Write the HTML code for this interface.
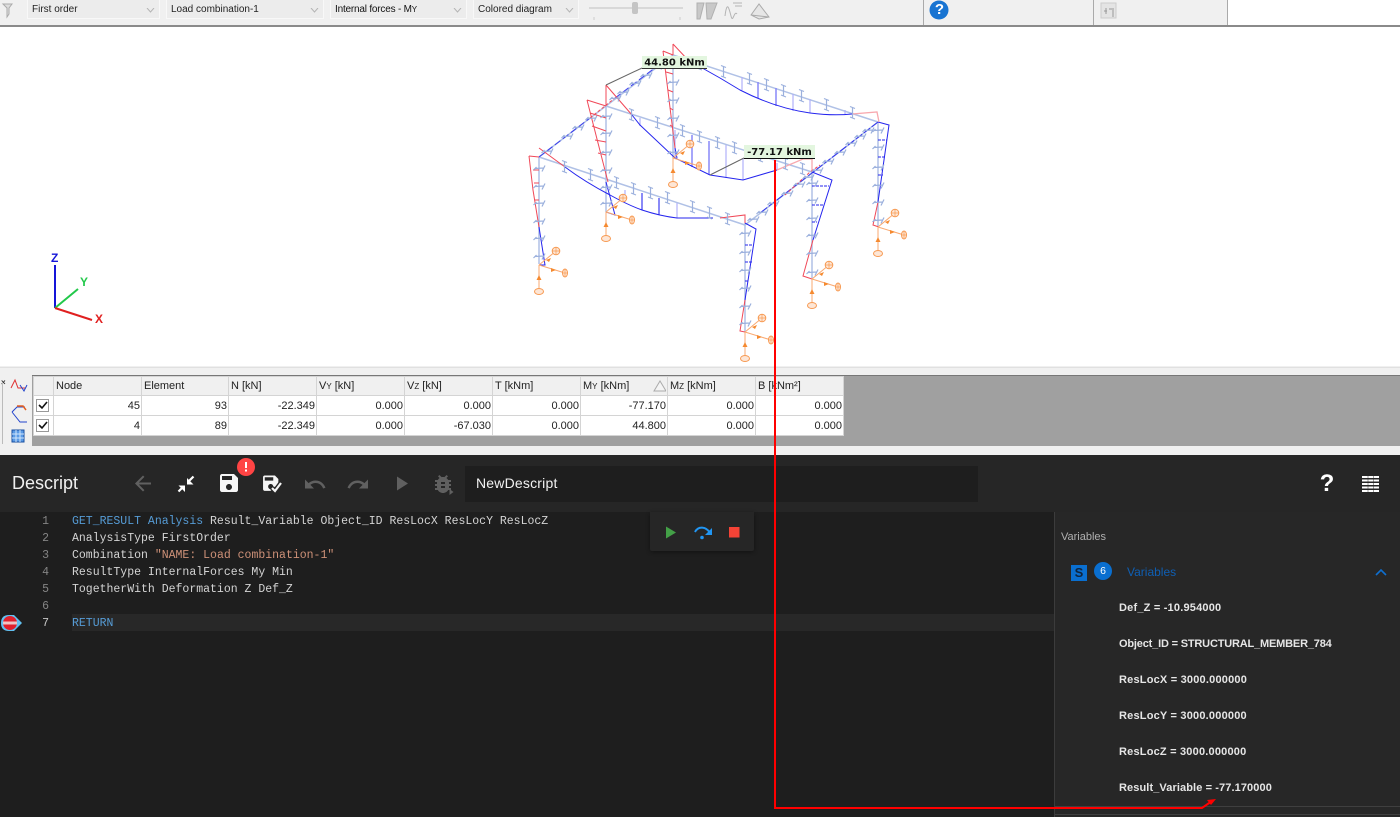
<!DOCTYPE html>
<html><head><meta charset="utf-8"><title>Descript</title>
<style>
html,body{margin:0;padding:0;width:1400px;height:817px;overflow:hidden;background:#fff;font-family:"Liberation Sans",sans-serif}
.a{position:absolute}
#tb{left:0;top:0;width:1227px;height:25px;background:#f0f0f0}
.combo{position:absolute;top:0;height:19px;background:#ececec;border:1px solid #f8f8f8;border-top:0;font-size:10px;line-height:19px;color:#222;padding-left:4px;box-sizing:border-box}
.combo svg{position:absolute;right:4px;top:8px}
table{border-collapse:collapse;table-layout:fixed;position:absolute;left:33px;top:376px;font-size:11px;color:#222;background:#fff}
td{border:1px solid #d4d4d4;padding:0 1px 0 0;height:19px;text-align:right;white-space:nowrap;overflow:hidden}
tr.h td{background:#f0f0f0;text-align:left;padding-left:2px;height:18px}
small{font-size:8px}
.code{position:absolute;left:72px;font:11.5px/17px "Liberation Mono",monospace;color:#d4d4d4;white-space:pre}
.ln{position:absolute;left:20px;width:29px;text-align:right;font:11.5px/17px "Liberation Mono",monospace;color:#858585}
.k{color:#569cd6}.s{color:#ce9178}
.v{position:absolute;left:1119px;font-size:11px;font-weight:bold;color:#e6e6e6;white-space:nowrap;line-height:14px;letter-spacing:.2px}
</style></head><body>

<div id="tb" class="a"></div>
<div class="a" style="left:0;top:25px;width:1400px;height:2px;background:#8a8a8a"></div>
<div class="a" style="left:923px;top:0;width:1px;height:25px;background:#aaa"></div>
<div class="a" style="left:1093px;top:0;width:1px;height:25px;background:#aaa"></div>
<div class="a" style="left:1227px;top:0;width:1px;height:25px;background:#aaa"></div>

<div class="combo" style="left:27px;width:133px">First order<svg width="9" height="5"><path d="M1 0l3.5 4L8 0" fill="none" stroke="#b4b4b4"/></svg></div>
<div class="combo" style="left:166px;width:158px">Load combination-1<svg width="9" height="5"><path d="M1 0l3.5 4L8 0" fill="none" stroke="#b4b4b4"/></svg></div>
<div class="combo" style="left:330px;width:137px;letter-spacing:-.2px;color:#111">Internal forces - M<small>Y</small><svg width="9" height="5"><path d="M1 0l3.5 4L8 0" fill="none" stroke="#b4b4b4"/></svg></div>
<div class="combo" style="left:473px;width:106px">Colored diagram<svg width="9" height="5"><path d="M1 0l3.5 4L8 0" fill="none" stroke="#b4b4b4"/></svg></div>

<svg class="a" style="left:0;top:0" width="1400" height="27">
<path d="M3 4h9l-3 4v6l-2 3v-9z" fill="#ddd" stroke="#aaa"/>
<path d="M589 8h94" stroke="#d8d8d8" stroke-width="2"/><path d="M594 17v3M680 17v3" stroke="#ccc"/>
<rect x="632" y="2" width="6" height="12" rx="2" fill="#c4c4c4"/>
<path d="M697 3h7l-4 16h-3zM706 3h11l-6 16h-4z" fill="#c8c8c8" stroke="#b0b0b0"/>
<path d="M725 16c2-16 4-8 6 0s3-6 6-2M733 3h9M735 6h7" fill="none" stroke="#b4b4b4"/>
<path d="M751 15l8-11 10 13-10 2zM751 15l18 2" fill="#e6e6e6" stroke="#aaa"/>
<circle cx="939" cy="10" r="9.500" fill="#1874d2"/>
<path d="M1101 3h15v15h-15z" fill="#e4e4e4" stroke="#ccc"/><path d="M1104 11h3M1109 9h3M1113 8v9M1106 8v6" stroke="#999"/>
</svg>
<div class="a" style="left:930px;top:1px;width:19px;text-align:center;color:#fff;font:bold 15px/18px 'Liberation Sans',sans-serif">?</div>

<svg class="a" style="left:0;top:27px;filter:blur(.3px)" width="1400" height="339" viewBox="0 27 1400 339">
<defs>
<path id="bt" d="M-3 -6.500l5 2M-0.500 -5.500v10.500M-3 4l5 2" fill="none" stroke="#9bb0dd" stroke-width="1.200"/>
<path id="ct" d="M-5.500 2l3 -3M-4 0.500l8.500 -0.500M3 3.500l3 -6" fill="none" stroke="#9bb0dd" stroke-width="1.200"/>
<g id="sup" fill="none" stroke="#f79a52">
<path d="M0 0v27M0 0l17 -14M0 0l26 8" stroke="#f9a870"/>
<path d="M-2.500 15l2.500 -5 2.500 5zM7 -5l5 -2 -2 4zM12 3l5 2 -5 2z" fill="#f58a30" stroke="none"/>
<ellipse cx="0" cy="26.500" rx="4.500" ry="3" fill="#fde6d6"/>
<circle cx="17" cy="-14" r="3.800" fill="#fde6d6"/><path d="M13.500 -14h7M17 -17.500v7" stroke-width=".7"/>
<ellipse cx="26" cy="8" rx="2.500" ry="4" fill="#fde6d6"/><path d="M23.500 8h5M26 4v8" stroke-width=".7"/>
</g>
</defs>

<!-- members -->
<g fill="none" stroke="#b0c1e6" stroke-width="1.500">
<path d="M539 157V264M606 106V212M673 55V158M745 223V332M812 172V278M878 122V227"/>
<path d="M539 157L673 55M539 157L745 225M606 106L812 172M673 55L878 122M878 122L745 225"/>
</g>

<!-- verticals -->
<g fill="none" stroke="#b0b0fa" stroke-width="1.200">
<path d="M625 190V202M677 203V218M640 118V126M675 130V158M726 145V178M743 158V180M777 163V170M742 77V90M793 94V111M810 99V113M845 110V115"/>
</g>
<g fill="none" stroke="#2a2af0" stroke-width="1.100">
<path d="M642 193V210M659 198V215"/>
</g>
<g fill="none" stroke="#8888f8" stroke-width="1.500">
<path d="M709 141V175M758 82V98M776 88V106M692 135V167"/>
</g>

<!-- blue moment -->
<g fill="none" stroke="#2424ee" stroke-width="1">
<path d="M565 167Q585 182 610 195Q628 205 642 210Q660 216 677 218H713"/>
<path d="M632 115L640 125L675 158L710 175L743 180L777 170"/>
<path d="M688 60L720 78L740 90Q775 108 810 113Q833 116 852 114"/>
<path d="M745 223L756 229L745 300M812 172L832 180L813 240M878 122L889 125L878 202M606 182L615 215L606 212M675 148L677 158M539 227L545 265L539 265"/>
<path stroke-dasharray="3 1" d="M745 245h8M745 262h7M745 281h4M812 186h17M812 205h12M812 222h5M878 140h9M878 157h7M878 175h5"/>
<path d="M539 157L590 118M615 98L660 64" stroke-dasharray="7 3" opacity=".85"/>
<path d="M878 122L760 213" stroke-dasharray="8 2" opacity=".9"/>
</g>

<!-- red moment -->
<g fill="none" stroke="#f04858" stroke-width="1">
<path d="M539 148L565 167M529 156L533 190L539 227M529 156L539 157"/>
<path d="M606 85L632 115M606 85V106M587 100L608 182M587 100L606 106"/>
<path d="M673 44L688 60M673 44V55M663 51L675 148M663 51L673 55"/>
<path d="M745 300L740 331L745 332M813 240L803 276L812 279M878 202L873 225L879 227"/>
<path d="M720 218L745 215V223"/>
<path d="M533 170h6M534 183h5M535 200h4M590 113L606 118M592 126L606 131M595 140L606 142M598 153L606 155M666 72L673 74M668 90L673 92M670 108L673 110M670 125L673 127"/>
<path stroke="#f8a8ae" stroke-width="1.300" d="M852 114L877 112L879 122M777 170L803 159H812V170"/>
<path stroke-dasharray="3 2" d="M785 195L810 172L820 165M590 118L615 98"/>
</g>

<!-- ticks -->
<g>
<use href="#bt" x="565" y="167"/><use href="#bt" x="591" y="175"/><use href="#bt" x="617" y="183"/><use href="#bt" x="634" y="189"/><use href="#bt" x="651" y="193"/><use href="#bt" x="668" y="198"/><use href="#bt" x="693" y="207"/><use href="#bt" x="710" y="213"/><use href="#bt" x="728" y="219"/>
<use href="#bt" x="632" y="115"/><use href="#bt" x="658" y="123"/><use href="#bt" x="683" y="131"/><use href="#bt" x="700" y="137"/><use href="#bt" x="718" y="143"/><use href="#bt" x="735" y="148"/><use href="#bt" x="761" y="156"/><use href="#bt" x="786" y="164"/><use href="#bt" x="803" y="169"/>
<use href="#bt" x="700" y="64"/><use href="#bt" x="724" y="72"/><use href="#bt" x="750" y="79"/><use href="#bt" x="767" y="85"/><use href="#bt" x="784" y="91"/><use href="#bt" x="802" y="96"/><use href="#bt" x="827" y="105"/><use href="#bt" x="853" y="113"/>
<use href="#ct" x="547" y="151"/><use href="#ct" x="567" y="136"/><use href="#ct" x="578" y="127"/><use href="#ct" x="591" y="118"/><use href="#ct" x="615" y="98"/><use href="#ct" x="623" y="92"/><use href="#ct" x="635" y="83"/><use href="#ct" x="646" y="75"/><use href="#ct" x="658" y="66"/>
<use href="#ct" x="868" y="130"/><use href="#ct" x="860" y="136"/><use href="#ct" x="851" y="143"/><use href="#ct" x="840" y="152"/><use href="#ct" x="828" y="161"/><use href="#ct" x="817" y="170"/><use href="#ct" x="808" y="177"/><use href="#ct" x="799" y="184"/><use href="#ct" x="787" y="193"/><use href="#ct" x="773" y="203"/><use href="#ct" x="762" y="212"/><use href="#ct" x="753" y="219"/>
<use href="#ct" x="539" y="168"/><use href="#ct" x="539" y="186"/><use href="#ct" x="539" y="203"/><use href="#ct" x="539" y="221"/><use href="#ct" x="539" y="238"/><use href="#ct" x="539" y="256"/>
<use href="#ct" x="606" y="116"/><use href="#ct" x="606" y="133"/><use href="#ct" x="606" y="152"/><use href="#ct" x="606" y="170"/><use href="#ct" x="606" y="187"/><use href="#ct" x="606" y="203"/>
<use href="#ct" x="673" y="65"/><use href="#ct" x="673" y="82"/><use href="#ct" x="673" y="100"/><use href="#ct" x="673" y="118"/><use href="#ct" x="673" y="135"/><use href="#ct" x="673" y="152"/>
<use href="#ct" x="745" y="233"/><use href="#ct" x="745" y="252"/><use href="#ct" x="745" y="270"/><use href="#ct" x="745" y="288"/><use href="#ct" x="745" y="306"/><use href="#ct" x="745" y="323"/>
<use href="#ct" x="812" y="183"/><use href="#ct" x="812" y="200"/><use href="#ct" x="812" y="218"/><use href="#ct" x="812" y="235"/><use href="#ct" x="812" y="253"/><use href="#ct" x="812" y="272"/>
<use href="#ct" x="878" y="130"/><use href="#ct" x="878" y="147"/><use href="#ct" x="878" y="167"/><use href="#ct" x="878" y="185"/><use href="#ct" x="878" y="202"/><use href="#ct" x="878" y="220"/>
</g>

<!-- supports -->
<use href="#sup" x="539" y="265"/><use href="#sup" x="606" y="212"/><use href="#sup" x="673" y="158"/><use href="#sup" x="745" y="332"/><use href="#sup" x="812" y="279"/><use href="#sup" x="878" y="227"/>

<!-- labels -->
<path d="M642 68L606 85" stroke="#666"/><path d="M744 158L710 175" stroke="#666"/>
<rect x="642" y="56" width="65" height="12" fill="#e3f6df"/><path d="M642 68.500H707" stroke="#333"/>
<rect x="744" y="145" width="71" height="13" fill="#e3f6df"/><path d="M744 158.500H815" stroke="#111"/>
<text x="674.500" y="65.500" text-anchor="middle" font-family="DejaVu Sans" font-weight="bold" font-size="10" fill="#111">44.80 kNm</text>
<text x="779.500" y="155" text-anchor="middle" font-family="DejaVu Sans" font-weight="bold" font-size="10" fill="#111">-77.17 kNm</text>

<!-- axes -->
<path d="M55 308V265" stroke="#1515d8" stroke-width="2"/>
<path d="M55 308L78 289" stroke="#22c84a" stroke-width="2"/>
<path d="M55 308L92 320" stroke="#e02020" stroke-width="2"/>
<text x="51" y="262" font-size="12" font-weight="bold" fill="#1515d8" font-family="Liberation Sans">Z</text>
<text x="80" y="286" font-size="12" font-weight="bold" fill="#22c84a" font-family="Liberation Sans">Y</text>
<text x="95" y="323" font-size="12" font-weight="bold" fill="#e02020" font-family="Liberation Sans">X</text>
</svg>

<!-- table strip -->
<div class="a" style="left:0;top:366px;width:1400px;height:89px;background:#f0f0f0"></div>
<div class="a" style="left:0;top:367px;width:1400px;height:1px;background:#e0e0e0"></div>
<div class="a" style="left:32px;top:375px;width:1368px;height:71px;background:#a0a0a0;border-top:1px solid #777;box-sizing:border-box"></div>
<div class="a" style="left:1px;top:379px;font:bold 8px/8px 'Liberation Sans',sans-serif;color:#333">×</div>
<div class="a" style="left:2px;top:382px;width:1px;height:62px;background:#bbb"></div>
<svg class="a" style="left:9px;top:376px" width="20" height="70">
<path d="M2 12L6 4l3 8h7" fill="none" stroke="#e03030"/><path d="M11 9l4 6 3-6" fill="none" stroke="#2244cc"/>
<path d="M3 36l5-5h8M3 36l8 10h7" fill="none" stroke="#2244cc"/><path d="M8 30h6l3 4" fill="none" stroke="#e56020" stroke-width="1.500"/>
<rect x="3" y="54" width="12" height="12" fill="#5b9be6" stroke="#1a4fa0"/><path d="M3 58h12M3 62h12M7 54v12M11 54v12" stroke="#cfe4fb"/>
</svg>

<table style="width:811px">
<colgroup><col style="width:20px"><col style="width:88px"><col style="width:87px"><col style="width:88px"><col style="width:88px"><col style="width:88px"><col style="width:88px"><col style="width:87px"><col style="width:88px"><col style="width:88px"></colgroup>
<tr class="h"><td></td><td>Node</td><td>Element</td><td>N [kN]</td><td>V<small>Y</small> [kN]</td><td>V<small>Z</small> [kN]</td><td>T [kNm]</td><td>M<small>Y</small> [kNm]</td><td>M<small>Z</small> [kNm]</td><td>B [kNm²]</td></tr>
<tr><td></td><td>45</td><td>93</td><td>-22.349</td><td>0.000</td><td>0.000</td><td>0.000</td><td>-77.170</td><td>0.000</td><td>0.000</td></tr>
<tr><td></td><td>4</td><td>89</td><td>-22.349</td><td>0.000</td><td>-67.030</td><td>0.000</td><td>44.800</td><td>0.000</td><td>0.000</td></tr>
</table>
<svg class="a" style="left:36px;top:378px" width="630" height="60">
<g fill="#fff" stroke="#999"><rect x="0.500" y="21.500" width="12" height="12"/><rect x="0.500" y="41.500" width="12" height="12"/></g>
<path d="M3 27l3 3 5-6M3 47l3 3 5-6" fill="none" stroke="#111" stroke-width="1.600"/>
<path d="M619 13l6-10 6 10z" fill="#f4f4f4" stroke="#aaa" transform="translate(-1,0)"/>
</svg>

<!-- dark top bar -->
<div class="a" style="left:0;top:455px;width:1400px;height:362px;background:#262626"></div>
<div class="a" style="left:12px;top:473px;font-size:18px;line-height:21px;color:#f0f0f0">Descript</div>
<div class="a" style="left:465px;top:466px;width:513px;height:36px;background:#1e1e1e;font-size:14px;line-height:35px;color:#f2f2f2;text-indent:11px;letter-spacing:.2px">NewDescript</div>

<svg class="a" style="left:0;top:0" width="1400" height="517">
<path transform="translate(131,471.500)" d="M20 11H7.830l5.590-5.590L12 4l-8 8 8 8 1.410-1.410L7.830 13H20v-2z" fill="#606060"/>
<path d="M193.500 476.500L189 481M178.500 491.500L183 487" fill="none" stroke="#fff" stroke-width="2.200"/>
<path d="M187 478V484.500H193.500zM185 485.500H178.500L185 492z" fill="#fff"/>
<path transform="translate(217,471)" d="M17 3H5c-1.110 0-2 .9-2 2v14c0 1.100.89 2 2 2h14c1.100 0 2-.9 2-2V7l-4-4zm-5 16c-1.660 0-3-1.340-3-3s1.340-3 3-3 3 1.340 3 3-1.340 3-3 3zm3-10H5V5h10v4z" fill="#f6f6f6"/>
<path transform="translate(260.500,473) scale(.85)" d="M17 3H5c-1.110 0-2 .9-2 2v14c0 1.100.89 2 2 2h14c1.100 0 2-.9 2-2V7l-4-4zm-5 16c-1.660 0-3-1.340-3-3s1.340-3 3-3 3 1.340 3 3-1.340 3-3 3zm3-10H5V5h10v4z" fill="#f6f6f6"/>
<path d="M272 488l3 3 6-8" fill="none" stroke="#262626" stroke-width="5"/>
<path d="M272 488l3 3 6-8" fill="none" stroke="#f6f6f6" stroke-width="2.200"/>
<path transform="translate(303,472.500)" d="M12.500 8c-2.650 0-5.050.99-6.900 2.600L2 7v9h9l-3.620-3.620c1.390-1.160 3.160-1.880 5.120-1.880 3.540 0 6.550 2.310 7.600 5.500l2.370-.78C21.080 11.030 17.150 8 12.500 8z" fill="#606060"/>
<path transform="translate(346,472.500)" d="M18.400 10.600C16.550 8.990 14.150 8 11.500 8c-4.650 0-8.580 3.030-9.960 7.220L3.900 16c1.050-3.190 4.050-5.500 7.600-5.500 1.950 0 3.730.72 5.120 1.880L13 16h9V7l-3.600 3.600z" fill="#606060"/>
<path transform="translate(389,471.500)" d="M8 5v14l11-7z" fill="#606060"/>
<path transform="translate(431,472)" d="M20 8h-2.810c-.45-.78-1.070-1.450-1.820-1.960L17 4.410 15.590 3l-2.170 2.170C12.960 5.060 12.490 5 12 5c-.49 0-.96.06-1.410.17L8.410 3 7 4.410l1.620 1.630C7.880 6.550 7.260 7.220 6.810 8H4v2h2.090c-.05.33-.09.66-.09 1v1H4v2h2v1c0 .34.04.67.09 1H4v2h2.810c1.040 1.790 2.970 3 5.190 3s4.150-1.210 5.190-3H20v-2h-2.090c.05-.33.09-.66.09-1v-1h2v-2h-2v-1c0-.34-.04-.67-.09-1H20V8zm-6 8h-4v-2h4v2zm0-4h-4v-2h4v2z" fill="#606060"/>
<path d="M449.500 489l4 3-4 3z" fill="#606060"/>
<circle cx="246" cy="467" r="9" fill="#f44"/><rect x="245" y="462" width="2" height="6" fill="#fff"/><rect x="245" y="469.500" width="2" height="2" fill="#fff"/>
<path d="M1362 477h17M1362 480.500h17M1362 484h17M1362 487.500h17M1362 491h17" stroke="#fff" stroke-width="2"/><path d="M1368 476v16M1373.500 476v16" stroke="#262626" opacity=".45"/>
</svg>
<div class="a" style="left:1317px;top:470px;width:20px;text-align:center;color:#fff;font:bold 24px/28px 'Liberation Sans',sans-serif">?</div>

<!-- editor -->
<div class="a" style="left:0;top:512px;width:1055px;height:305px;background:#1e1e1e"></div>
<div class="a" style="left:72px;top:614px;width:983px;height:17px;background:#282828"></div>
<div class="ln" style="top:513px">1</div><div class="ln" style="top:530px">2</div><div class="ln" style="top:547px">3</div><div class="ln" style="top:564px">4</div><div class="ln" style="top:581px">5</div><div class="ln" style="top:598px">6</div><div class="ln" style="top:615px;color:#c6c6c6">7</div>
<div class="code" style="top:513px"><span class="k">GET_RESULT Analysis</span> Result_Variable Object_ID ResLocX ResLocY ResLocZ</div>
<div class="code" style="top:530px">AnalysisType FirstOrder</div>
<div class="code" style="top:547px">Combination <span class="s">"NAME: Load combination-1"</span></div>
<div class="code" style="top:564px">ResultType InternalForces My Min</div>
<div class="code" style="top:581px">TogetherWith Deformation Z Def_Z</div>
<div class="code" style="top:615px"><span class="k">RETURN</span></div>
<svg class="a" style="left:0;top:612px" width="24" height="22">
<path d="M1 11Q1 3 9 3H14L22 11L14 19H9Q1 19 1 11z" fill="#62c0f0"/><circle cx="10" cy="11" r="7" fill="#e0202c"/><rect x="3" y="9.500" width="14" height="3" fill="#f0c4c4"/>
</svg>

<!-- debug float -->
<div class="a" style="left:650px;top:512px;width:104px;height:39px;background:#262626;box-shadow:0 1px 4px rgba(0,0,0,.4);border-radius:0 0 2px 2px"></div>
<svg class="a" style="left:650px;top:512px" width="104" height="39">
<path d="M16 14.500l10 6-10 6z" fill="#43a047"/>
<path d="M45 20c3-6 11-6 15 1" fill="none" stroke="#2196f3" stroke-width="2"/><path d="M62 16v7h-7z" fill="#2196f3"/><circle cx="52" cy="25.500" r="1.800" fill="#2196f3"/>
<rect x="79" y="15" width="10.500" height="10.500" fill="#f44336"/>
</svg>

<!-- variables -->
<div class="a" style="left:1054px;top:512px;width:1px;height:305px;background:#3c3c3c"></div>
<div class="a" style="left:1055px;top:512px;width:345px;height:305px;background:#272727"></div>
<div class="a" style="left:1061px;top:531px;font-size:11px;line-height:13px;color:#b0b0b0">Variables</div>
<div class="a" style="left:1071px;top:565px;width:16px;height:16px;background:#0a6fd0;color:#10243c;font:bold 13px/16px 'Liberation Sans',sans-serif;text-align:center">S</div>
<div class="a" style="left:1094px;top:562px;width:18px;height:18px;border-radius:50%;background:#0a6fd0;color:#fff;font:10.500px/18px 'Liberation Sans',sans-serif;text-align:center">6</div>
<div class="a" style="left:1127px;top:565px;font-size:12px;line-height:15px;color:#0f5fb4">Variables</div>
<svg class="a" style="left:1375px;top:568px" width="13" height="8"><path d="M1 7l5-5 5 5" fill="none" stroke="#0f6fd0" stroke-width="1.600"/></svg>
<div class="v" style="top:601px">Def_Z = -10.954000</div>
<div class="v" style="top:637px;letter-spacing:-.18px">Object_ID = STRUCTURAL_MEMBER_784</div>
<div class="v" style="top:673px">ResLocX = 3000.000000</div>
<div class="v" style="top:709px">ResLocY = 3000.000000</div>
<div class="v" style="top:745px">ResLocZ = 3000.000000</div>
<div class="v" style="top:781px;letter-spacing:.1px">Result_Variable = -77.170000</div>
<div class="a" style="left:1055px;top:806px;width:345px;height:1px;background:#3f3f3f"></div>
<div class="a" style="left:1055px;top:814px;width:345px;height:1px;background:#3f3f3f"></div>

<!-- red annotation -->
<svg class="a" style="left:0;top:0;pointer-events:none" width="1400" height="817">
<path d="M775 160V808H1202L1212 801" fill="none" stroke="#f00" stroke-width="2"/>
<path d="M1216 799l-9 1 4 5z" fill="#f00"/>
</svg>
</body></html>
